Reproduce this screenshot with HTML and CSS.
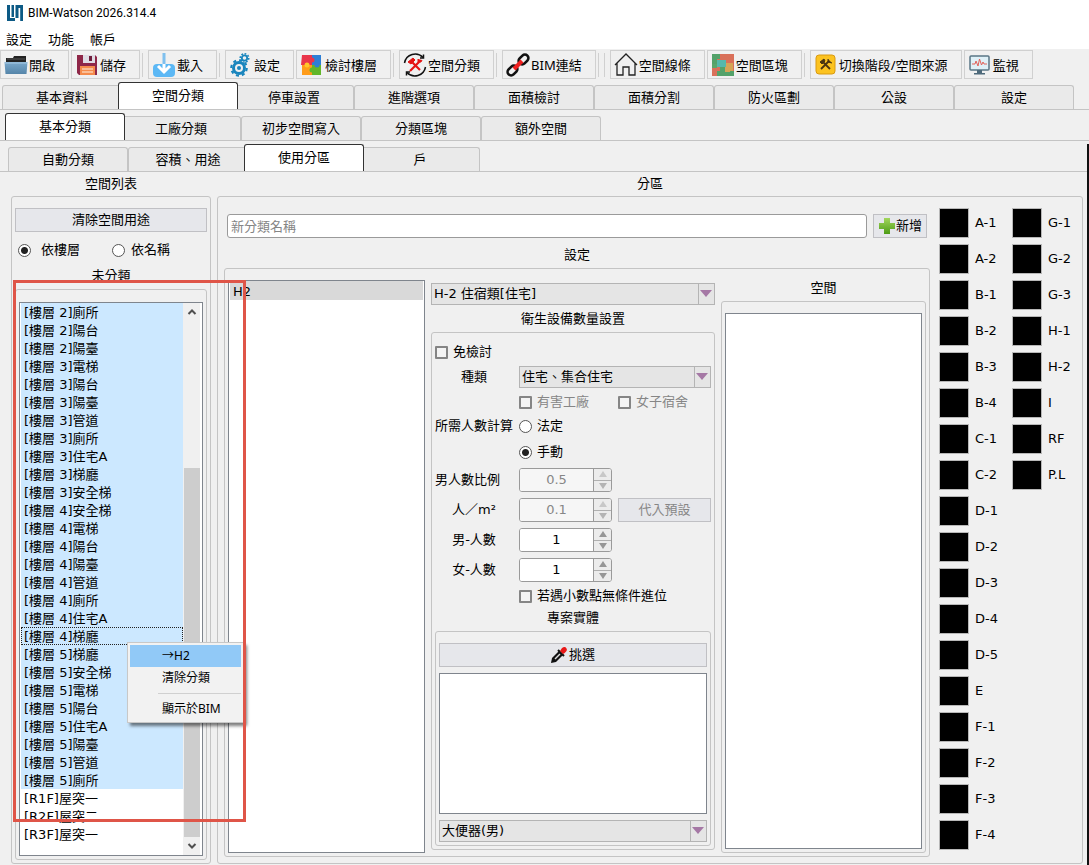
FILE: index.html
```
<!DOCTYPE html>
<html lang="zh-Hant">
<head>
<meta charset="utf-8">
<title>BIM-Watson 2026.314.4</title>
<link rel="stylesheet" href="styles.css">
</head>
<body>
<header class="titlebar">
  <svg class="logo" viewBox="0 0 16 16" width="16" height="16"><g fill="#0c5a85"><path d="M0 0h3v13h5v3H0z"/><path d="M4.500 0h2.500v12h-2.500z"/><path d="M8.500 0h7.500v16h-2.800V3h-1.700v10h-3z"/></g></svg>
  <h1 class="app-name">BIM-Watson 2026.314.4</h1>
</header>
<nav class="menubar">
  <button class="menu-item">設定</button>
  <button class="menu-item">功能</button>
  <button class="menu-item">帳戶</button>
</nav>
<div class="toolbar">
  <button class="tool"><svg class="tool-icon" viewBox="0 0 24 24"><defs><linearGradient id="fold" x1="0" y1="0" x2="0" y2="1"><stop offset="0" stop-color="#7ba9cc"/><stop offset="1" stop-color="#5585a9"/></linearGradient></defs><path d="M2 9V5h7l1-2h12v6z" fill="#222"/><path d="M3 6h18" stroke="#555"/><path d="M.5 9h23l-1 12h-21z" fill="url(#fold)"/><path d="M1 10h22" stroke="#a8cae4"/></svg>開啟</button>
  <button class="tool"><svg class="tool-icon" viewBox="0 0 24 24"><path d="M2 2h18l2 2v18H4l-2-2z" fill="#8e2748"/><path d="M8 2h12v8H8z" fill="#dfdce4"/><path d="M14 3h3v5h-3z" fill="#6e1f3c"/><path d="M5 13h15v9H5z" fill="#f58b4b"/><path d="M7 16h11M7 19h11" stroke="#fff0e0"/></svg>儲存</button>
  <span class="tool-sep"></span>
  <button class="tool"><svg class="tool-icon" viewBox="0 0 24 24"><rect x="1" y="11" width="22" height="13" rx="4" fill="#5cb8f5"/><path d="M12 10v9M6 13l6 6 6-6" fill="none" stroke="#fff" stroke-width="3"/><path d="M12 0v11" stroke="#7fc0ee" stroke-width="3"/></svg>載入</button>
  <span class="tool-sep"></span>
  <button class="tool"><svg class="tool-icon" viewBox="0 0 24 24"><g fill="none" stroke="#1985bd"><circle cx="10" cy="15" r="5.500" stroke-width="3"/><circle cx="10" cy="15" r="7.800" stroke-width="2" stroke-dasharray="3.100 3"/><circle cx="15.500" cy="5" r="2.700" stroke-width="1.800"/><circle cx="15.500" cy="5" r="4.300" stroke-width="1.500" stroke-dasharray="1.800 1.500"/></g><circle cx="10" cy="15" r="2" fill="#1985bd"/></svg>設定</button>
  <button class="tool"><svg class="tool-icon" viewBox="0 0 24 24"><path d="M2 2h10v10H1z" fill="#e9354a"/><path d="M12 2h9v10h-9z" fill="#2d7fd6"/><path d="M2 12h10v10H2z" fill="#ff9c1a"/><path d="M12 12h9v10h-9z" fill="#62b629"/><circle cx="12" cy="7" r="2.500" fill="#e9354a"/><circle cx="17" cy="12" r="2.500" fill="#2d7fd6"/><circle cx="12" cy="17" r="2.500" fill="#62b629"/><circle cx="7" cy="12" r="2.500" fill="#ffc629"/></svg>檢討樓層</button>
  <span class="tool-sep"></span>
  <button class="tool"><svg class="tool-icon" viewBox="0 0 24 24"><g fill="none" stroke="#111" stroke-width="1.500"><path d="M1.500 10A10.800 10.800 0 0 1 20 4.500M22.500 14A10.800 10.800 0 0 1 4 19.500"/><path d="M20.500 1.500V5H17M3.500 22.500V19H7"/></g><path d="M7 18l10-10M8 8l9 9" stroke="#e51414" stroke-width="2.200"/><path d="M5 9l5-4 2 2-4 4zM15 6l0 3 3 0 1-2" fill="#e51414" stroke="#e51414"/></svg>空間分類</button>
  <span class="tool-sep"></span>
  <button class="tool"><svg class="tool-icon" viewBox="0 0 24 24"><g fill="none" stroke-width="2.600"><rect x="-5.500" y="-3.500" width="11" height="7" rx="3.500" transform="translate(17.500 6.500) rotate(-45)" stroke="#111"/><rect x="-5.500" y="-3.500" width="11" height="7" rx="3.500" transform="translate(6.500 17.500) rotate(-45)" stroke="#111"/><path d="M8 16l8-8" stroke="#ee2020" stroke-width="4"/></g></svg>BIM連結</button>
  <span class="tool-sep"></span>
  <span class="tool-sep"></span>
  <button class="tool"><svg class="tool-icon" viewBox="0 0 24 24"><path d="M1 12L12 1l11 11M3 10v12h6v-8h6v8h6V10" fill="none" stroke="#222" stroke-width="1.300"/></svg>空間線條</button>
  <button class="tool"><svg class="tool-icon" viewBox="0 0 24 24"><path d="M1 1h22v22H1z" fill="#d9705a"/><path d="M1 1h8v5H6v6H1zM9 14h6v9H6v-5h3z" fill="#54a26a"/><path d="M1 11h5v4H1z" fill="#5aa66c"/><path d="M6 7h9v7H6z" fill="#55b8ac"/><path d="M15 10h7v9h-8v-5h1z" fill="#d5a457"/><path d="M19 18h4v5h-8v-4h4z" fill="#54a26a"/></svg>空間區塊</button>
  <span class="tool-sep"></span>
  <button class="tool"><svg class="tool-icon" viewBox="0 0 24 24"><rect x="2" y="2" width="19" height="19" rx="3" fill="#fcc320" stroke="#d99a10"/><path d="M7 16l8-8M8 8l8 8" stroke="#4a3510" stroke-width="1.800"/><path d="M6 9l4-3 1 2-3 3zM14 6v3l4 1" fill="#4a3510" stroke="#4a3510"/></svg>切換階段/空間來源</button>
  <button class="tool"><svg class="tool-icon" viewBox="0 0 24 24"><rect x="2" y="3" width="19" height="14" rx="1" fill="#dff0f7" stroke="#5a7585" stroke-width="1.500"/><path d="M4 11h3l1-3 2 5 1.500-7 2 6 1.500-3 1 2h3" fill="none" stroke="#e2625a"/><path d="M9 17h5v3h3v1.500H6V20h3z" fill="#4d697a"/></svg>監視</button>
</div>
<nav class="tabs tabs-main">
  <button class="tab">基本資料</button><button class="tab active">空間分類</button><button class="tab">停車設置</button><button class="tab">進階選項</button><button class="tab">面積檢討</button><button class="tab">面積分割</button><button class="tab">防火區劃</button><button class="tab">公設</button><button class="tab">設定</button>
</nav>
<nav class="tabs tabs-sub">
  <button class="tab active">基本分類</button><button class="tab">工廠分類</button><button class="tab">初步空間寫入</button><button class="tab">分類區塊</button><button class="tab">額外空間</button>
</nav>
<main class="page">
  <nav class="tabs tabs-leaf">
    <button class="tab">自動分類</button><button class="tab">容積、用途</button><button class="tab active">使用分區</button><button class="tab">戶</button>
  </nav>
  <div class="panels">
    <section class="panel">
      <h2 class="caption">空間列表</h2>
      <div class="group side">
        <button class="push">清除空間用途</button>
        <div class="radios">
          <label class="choice"><input type="radio" name="sort" checked>依樓層</label>
          <label class="choice near"><input type="radio" name="sort">依名稱</label>
        </div>
        <h3 class="caption-mid">未分類</h3>
        <div class="group unsorted">
          <div class="listbox scrolled">
            <ul class="rooms">
              <li class="sel">[樓層 2]廁所</li><li class="sel">[樓層 2]陽台</li><li class="sel">[樓層 2]陽臺</li><li class="sel">[樓層 3]電梯</li><li class="sel">[樓層 3]陽台</li><li class="sel">[樓層 3]陽臺</li><li class="sel">[樓層 3]管道</li><li class="sel">[樓層 3]廁所</li><li class="sel">[樓層 3]住宅A</li><li class="sel">[樓層 3]梯廳</li><li class="sel">[樓層 3]安全梯</li><li class="sel">[樓層 4]安全梯</li><li class="sel">[樓層 4]電梯</li><li class="sel">[樓層 4]陽台</li><li class="sel">[樓層 4]陽臺</li><li class="sel">[樓層 4]管道</li><li class="sel">[樓層 4]廁所</li><li class="sel">[樓層 4]住宅A</li><li class="sel focus">[樓層 4]梯廳</li><li class="sel">[樓層 5]梯廳</li><li class="sel">[樓層 5]安全梯</li><li class="sel">[樓層 5]電梯</li><li class="sel">[樓層 5]陽台</li><li class="sel">[樓層 5]住宅A</li><li class="sel">[樓層 5]陽臺</li><li class="sel">[樓層 5]管道</li><li class="sel">[樓層 5]廁所</li><li>[R1F]屋突一</li><li>[R2F]屋突二</li><li>[R3F]屋突一</li>
            </ul>
            <div class="scrollbar">
              <svg class="chev" viewBox="0 0 16 18"><path d="M4.500 11L8 7.500l3.500 3.500" fill="none" stroke="#505050" stroke-width="2"/></svg>
              <span class="track"></span><span class="thumb"></span>
              <svg class="chev" viewBox="0 0 16 18"><path d="M4.500 7L8 10.500 11.500 7" fill="none" stroke="#505050" stroke-width="2"/></svg>
            </div>
          </div>
        </div>
      </div>
    </section>
    <section class="panel">
      <h2 class="caption">分區</h2>
      <div class="group zones">
        <div class="zone-main">
          <form class="add-row">
            <input class="name-input" type="text" placeholder="新分類名稱" aria-label="新分類名稱">
            <button class="push add" type="button"><svg viewBox="0 0 18 18" width="18" height="18"><defs><linearGradient id="plus" x1="0" y1="0" x2="0" y2="1"><stop offset="0" stop-color="#a3d65c"/><stop offset="1" stop-color="#4d9c16"/></linearGradient></defs><path d="M6 1h6v5h5v6h-5v5H6v-5H1V6h5z" fill="url(#plus)"/></svg>新增</button>
          </form>
          <h3 class="caption-set">設定</h3>
          <div class="group settings">
            <ul class="listbox zone-list"><li>H2</li></ul>
            <div class="detail">
              <span class="combo"><select aria-label="類別"><option>H-2 住宿類[住宅]</option></select></span>
              <h4 class="caption-mid">衛生設備數量設置</h4>
              <div class="group sanitary">
                <div class="form">
                  <label class="choice full"><input type="checkbox">免檢討</label>
                  <label class="field" for="kind">種類</label>
                  <span class="combo span2"><select id="kind"><option>住宅、集合住宅</option></select></span>
                  <label class="choice second off"><input type="checkbox" disabled>有害工廠</label>
                  <label class="choice off"><input type="checkbox" disabled>女子宿舍</label>
                  <span class="field calc">所需人數計算</span>
                  <label class="choice span2 radio-row"><input type="radio" name="calc">法定</label>
                  <label class="choice second span2 radio-row"><input type="radio" name="calc" checked>手動</label>
                  <label class="field" for="ratio">男人數比例</label>
                  <span class="spin off"><input id="ratio" type="number" value="0.5" disabled><span class="steps"><button disabled aria-label="增加"></button><button disabled aria-label="減少"></button></span></span>
                  <label class="field first" for="density">人／m²</label>
                  <span class="spin off"><input id="density" type="number" value="0.1" disabled><span class="steps"><button disabled aria-label="增加"></button><button disabled aria-label="減少"></button></span></span>
                  <button class="push" disabled>代入預設</button>
                  <label class="field first" for="male">男-人數</label>
                  <span class="spin"><input id="male" type="number" value="1"><span class="steps"><button aria-label="增加"></button><button aria-label="減少"></button></span></span>
                  <label class="field first" for="female">女-人數</label>
                  <span class="spin"><input id="female" type="number" value="1"><span class="steps"><button aria-label="增加"></button><button aria-label="減少"></button></span></span>
                  <label class="choice second span2"><input type="checkbox">若遇小數點無條件進位</label>
                </div>
                <h5 class="caption-entity">專案實體</h5>
                <div class="group entity">
                  <button class="push"><svg viewBox="0 0 16 16" width="16" height="16"><path d="M0 16l1-5 7-7 4 4-7 7z" fill="#111"/><path d="M4 12l5-5" stroke="#ddd" stroke-width="1.500"/><path d="M7 3l6 6" stroke="#111" stroke-width="2"/><path d="M9 4l2-3q3-2 4.500.5T12 7z" fill="#e81818"/></svg>挑選</button>
                  <div class="listbox"></div>
                  <span class="combo"><select aria-label="設備"><option>大便器(男)</option></select></span>
                </div>
              </div>
            </div>
            <div class="spaces">
              <h4 class="caption-space">空間</h4>
              <div class="group space-group"><div class="listbox"></div></div>
            </div>
          </div>
        </div>
        <div class="swatches">
          <label><button></button>A-1</label><label><button></button>A-2</label><label><button></button>B-1</label><label><button></button>B-2</label><label><button></button>B-3</label><label><button></button>B-4</label><label><button></button>C-1</label><label><button></button>C-2</label><label><button></button>D-1</label><label><button></button>D-2</label><label><button></button>D-3</label><label><button></button>D-4</label><label><button></button>D-5</label><label><button></button>E</label><label><button></button>F-1</label><label><button></button>F-2</label><label><button></button>F-3</label><label><button></button>F-4</label><label><button></button>G-1</label><label><button></button>G-2</label><label><button></button>G-3</label><label><button></button>H-1</label><label><button></button>H-2</label><label><button></button>I</label><label><button></button>RF</label><label><button></button>P.L</label>
        </div>
      </div>
    </section>
  </div>
</main>
<div class="context-menu">
  <button class="hot">→H2</button>
  <button>清除分類</button>
  <hr>
  <button>顯示於BIM</button>
</div>
<div class="highlight-frame"></div>
</body>
</html>
```
FILE: styles.css
```
* { box-sizing: border-box; }
body, h1, h2, h3, h4, h5, ul { margin: 0; padding: 0; font-weight: normal; font-size: 13px; list-style: none; }
body, button, input, select {
  font-family: "DejaVu Sans", "Noto Sans CJK TC", sans-serif;
  font-size: 13px;
  line-height: 16px;
  color: #000;
}
body { display: flex; flex-direction: column; height: 100vh; background: #f0f0f0; overflow: hidden; position: relative; }
button { padding: 0; margin: 0; border: 0; background: none; white-space: nowrap; }
svg { flex: none; }

.titlebar { display: flex; align-items: center; gap: 5px; height: 25px; padding-left: 7px; background: #fff; flex: none; }
.app-name { font-family: Roboto, sans-serif; font-size: 12px; }
.menubar { display: flex; gap: 16px; height: 24px; padding: 2px 0 0 6px; background: #fff; flex: none; }
.menu-item { height: 24px; font-family: "Noto Sans", "Noto Sans CJK TC", sans-serif; }

.toolbar { display: flex; gap: 2px; height: 33px; padding-top: 1px; flex: none; white-space: nowrap; }
.tool {
  display: flex; align-items: center; gap: 1px; height: 29px; padding: 0 13px 0 3px;
  border: 1px solid #d0d0d0; font-family: "Noto Sans", "Noto Sans CJK TC", sans-serif;
}
.tool-icon { width: 24px; height: 24px; }
.tool-sep { width: 4px; height: 24px; margin-top: 3px; border-left: 1px solid #d0d0d0; }

.tabs { display: flex; align-items: flex-end; height: 28px; border-bottom: 1px solid #c4c4c4; flex: none; }
.tabs-main { padding-left: 2px; }
.tabs-sub { padding-left: 5px; margin: 3px 0; }
.tabs-leaf { padding-left: 8px; }
.tab {
  width: 120px; height: 24px; background: #eaeaea;
  border: 1px solid #c4c4c4; border-bottom: 0; border-radius: 3px 3px 0 0;
}
.tab.active { position: relative; height: 27px; margin: 0 -4px; padding-bottom: 1px; background: #fff; border-color: #333; }
.tab.active:first-child { margin-left: 0; }

.page { display: flex; flex-direction: column; flex: 1; min-height: 0; border-right: 2px solid #111; }
.panels { display: grid; grid-template-columns: 200px 1fr; gap: 6px; flex: 1; min-height: 0; padding: 0 4px 1px 11px; }
.panel { display: flex; flex-direction: column; min-height: 0; }
.group { border: 1px solid #c4c4c4; border-radius: 3px; min-height: 0; }
.caption { height: 24px; line-height: 23px; text-align: center; }
.caption-mid { height: 27px; line-height: 27px; text-align: center; flex: none; }
.caption-set { height: 30px; line-height: 34px; text-align: center; flex: none; }
.caption-entity { height: 16px; margin: 6px 0 5px; text-align: center; flex: none; }
.caption-space { height: 16px; margin-bottom: 5px; text-align: center; }

.push {
  display: flex; align-items: center; justify-content: center; height: 24px; flex: none;
  border: 1px solid #c0c0c4; background: #e6e7eb;
}
.push:disabled { color: #868686; }
.listbox { background: #fff; border: 1px solid #7f858d; }

.choice { display: flex; align-items: center; gap: 5px; white-space: nowrap; }
.choice.off { color: #868686; }
.choice input { appearance: none; width: 13px; height: 13px; margin: 0; border: 2px solid #858585; background: #f4f4f4; border-radius: 1px; flex: none; }
.choice input[type="radio"] { border: 1px solid #555; border-radius: 50%; background: #fff; }
.choice input[type="radio"]:checked { background: radial-gradient(circle, #222 3px, #fff 4px); }

.side { display: flex; flex-direction: column; flex: 1; padding: 11px 3px 3px; }
.radios { display: grid; grid-template-columns: 94px 1fr; height: 24px; margin-top: 6px; padding-left: 3px; flex: none; }
.radios .choice { gap: 10px; }
.radios .near { gap: 6px; }
.unsorted { display: flex; flex: 1; padding: 12px 3px 3px; }
.scrolled { display: flex; flex: 1; min-height: 0; overflow: hidden; padding: 0 2px 0 1px; }
.rooms { flex: 1; }
.rooms li { height: 18px; padding-left: 2px; border: 1px solid transparent; line-height: 18px; white-space: nowrap; }
.rooms .sel { background: #cce8ff; border-color: #cce8ff; }
.rooms .focus { border: 1px dotted #222; }
.scrollbar { display: flex; flex-direction: column; width: 17px; padding-left: 1px; background: #f0f0f0; }
.chev { width: 16px; height: 18px; }
.track { flex: 148; }
.thumb { flex: 370; background: #cdcdcd; }

.zones { display: grid; grid-template-columns: 1fr 140px; gap: 9px; flex: 1; padding: 11px 3px 6px 6px; }
.zone-main { display: flex; flex-direction: column; min-height: 0; }
.add-row { display: flex; gap: 6px; padding: 6px 3px 0; flex: none; }
.name-input { flex: 1; min-width: 0; height: 24px; padding: 0 3px; border: 1px solid #9a9a9a; border-radius: 3px; background: #fff; }
.name-input::placeholder { color: #858585; }
.add { width: 54px; gap: 0; }
.settings { display: grid; grid-template-columns: 197fr 284fr 205fr; gap: 6px; flex: 1; padding: 11px 3px 3px; }
.zone-list li { height: 19px; margin: 0 1px; padding: 2px 3px; line-height: 17px; background: #d9d9d9; }
.detail { display: flex; flex-direction: column; padding: 3px 0; min-height: 0; min-width: 0; }

.combo { display: block; position: relative; height: 22px; flex: none; }
.combo select { appearance: none; display: block; width: 100%; height: 22px; padding: 0 20px 0 2px; border: 1px solid #b4b4b4; border-radius: 0; background: #e5e5e5; }
.combo::before { content: ""; position: absolute; right: 16px; top: 0; height: 22px; border-left: 1px solid #b4b4b4; }
.combo::after { content: ""; position: absolute; right: 3px; top: 7px; border: 6px solid transparent; border-top: 7px solid #a578a5; border-bottom: 0; }

.sanitary { display: flex; flex-direction: column; flex: 1; padding: 11px 3px 3px; }
.form { display: grid; grid-template-columns: 78px 1fr 1fr; gap: 6px; align-items: center; flex: none; }
.form .full { grid-column: 1 / -1; }
.form .second { grid-column: 2; }
.form .span2 { grid-column: 2 / -1; }
.form .first { grid-column: 1; }
.form .choice { height: 16px; }
.form .radio-row { height: 20px; }
.field { text-align: center; white-space: nowrap; }
.field[for="ratio"] { text-align: left; }
.spin { display: flex; height: 24px; min-width: 0; border: 1px solid #9a9a9a; border-radius: 3px; overflow: hidden; background: #fff; }
.spin input { appearance: textfield; flex: 1; min-width: 0; padding: 0; border: 0; text-align: center; background: #fff; }
.spin input::-webkit-inner-spin-button { appearance: none; }
.spin.off input { color: #868686; background: #f6f6f6; }
.steps { display: flex; flex-direction: column; width: 18px; border-left: 1px solid #9a9a9a; background: #ececec; }
.steps button { display: flex; flex: 1; align-items: center; justify-content: center; }
.steps button + button { border-top: 1px solid #b0b0b0; }
.steps button::before { content: ""; border: 4px solid transparent; border-top: 0; border-bottom: 6px solid #969696; }
.steps button + button::before { border-bottom: 0; border-top: 6px solid #969696; }
.off .steps button::before { border-bottom-color: #c8c8c8; }
.off .steps button + button::before { border-top-color: #b4b4b4; }

.entity { display: flex; flex-direction: column; gap: 6px; flex: 1; padding: 11px 3px 3px; }
.entity .push { gap: 2px; }
.entity .listbox { flex: 1; min-height: 0; }
.spaces { display: flex; flex-direction: column; min-height: 0; }
.space-group { display: flex; flex: 1; padding: 11px 3px 3px; }
.space-group .listbox { flex: 1; }

.swatches { display: grid; grid-template-rows: repeat(18, 30px); grid-template-columns: 73px 67px; grid-auto-flow: column; row-gap: 6px; }
.swatches label { display: flex; align-items: center; gap: 6px; }
.swatches button { width: 30px; height: 30px; background: #000; border: 1px solid #b8b8b8; }

.context-menu {
  position: absolute; left: 127px; top: 642px; width: 117px; padding: 2px;
  background: #f2f2f2; border: 1px solid #c8c8c8; box-shadow: 3px 3px 3px rgba(0, 0, 0, .5);
}
.context-menu button { display: block; width: 111px; height: 22px; padding-left: 32px; text-align: left; font-family: "Noto Sans", "Noto Sans CJK TC", sans-serif; font-size: 12px; }
.context-menu .hot { background: #91c9f7; }
.context-menu hr { margin: 4px 0 4px 28px; border: 0; border-top: 1px solid #d0d0d0; }
.highlight-frame { position: absolute; left: 13px; top: 280px; width: 233px; height: 542px; border: 3px solid #df5548; pointer-events: none; }
```
